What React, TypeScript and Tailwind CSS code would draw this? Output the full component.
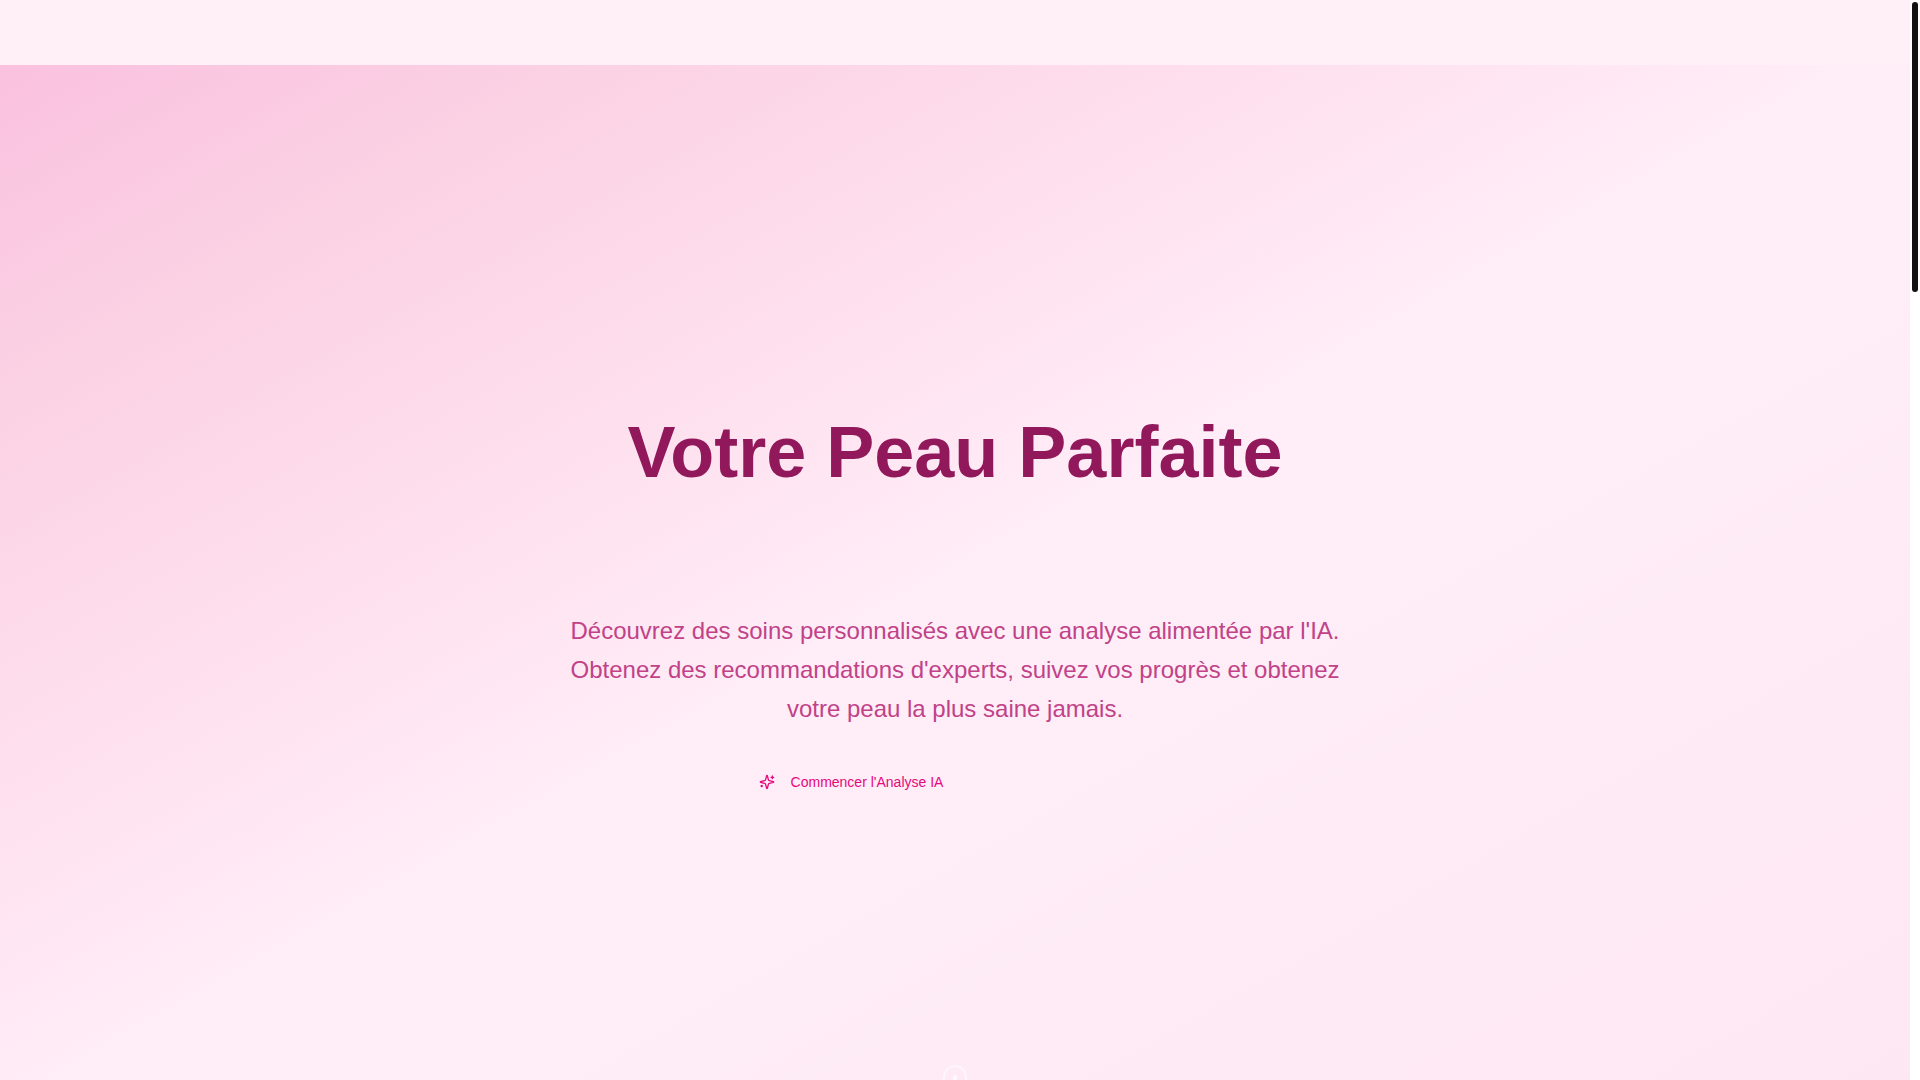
const Header = () => <header className="h-[65px] w-full shrink-0 bg-[#fff0f7]" />;

const SparklesIcon = () => (
    <svg
        viewBox="0 0 24 24"
        className="size-4"
        fill="none"
        stroke="currentColor"
        strokeWidth="2"
        strokeLinecap="round"
        strokeLinejoin="round"
        aria-hidden="true"
    >
        <path d="M9.937 15.5A2 2 0 0 0 8.5 14.063l-6.135-1.582a.5.5 0 0 1 0-.962L8.5 9.936A2 2 0 0 0 9.937 8.5l1.582-6.135a.5.5 0 0 1 .963 0L14.063 8.5A2 2 0 0 0 15.5 9.937l6.135 1.581a.5.5 0 0 1 0 .964L15.5 14.063a2 2 0 0 0-1.437 1.437l-1.582 6.135a.5.5 0 0 1-.963 0z" />
        <path d="M20 3v4" />
        <path d="M22 5h-4" />
        <path d="M4 17v2" />
        <path d="M5 18H3" />
    </svg>
);

// Mouse-shaped hint at the bottom of the hero
const ScrollHint = () => (
    <div className="absolute bottom-10 left-1/2 flex h-10 w-6 -translate-x-1/2 justify-center rounded-full border-2 border-white/50">
        <div className="mt-2 h-3 w-1 rounded-full bg-white/70" />
    </div>
);

const Hero = () => (
    <section className="relative flex h-screen w-full shrink-0 items-center justify-center bg-[linear-gradient(to_bottom_right,#fac1df_0%,#fbd1e4_15%,#fedeec_31%,#ffeef8_50%,#fde7f2_100%)]">
        <div className="w-full max-w-4xl px-4 text-center">
            <h1 className="mb-6 pb-[90px] text-7xl leading-[90px] font-bold text-[#90185b]">
                Votre Peau Parfaite
            </h1>
            <p className="mx-auto mb-8 max-w-[780px] text-2xl leading-[39px] text-[#c14288]">
                Découvrez des soins personnalisés avec une analyse alimentée par l'IA. Obtenez des
                recommandations d'experts, suivez vos progrès et obtenez votre peau la plus saine jamais.
            </p>
            <div className="flex justify-center gap-4">
                <button type="button" className="flex h-11 items-center gap-4 px-8 text-sm text-[#e6087c]">
                    <SparklesIcon />
                    Commencer l'Analyse IA
                </button>
                <div className="w-48" />
            </div>
        </div>
        <ScrollHint />
    </section>
);

export default function App() {
    return (
        <div className="flex h-screen overflow-hidden bg-white font-['Liberation_Sans',Arial,sans-serif]">
            <main className="flex flex-1 flex-col overflow-hidden">
                <Header />
                <Hero />
            </main>
            <div className="w-[10px] shrink-0 px-[2px] py-[2px]">
                <div className="h-[290px] rounded-full bg-[#111111]" />
            </div>
        </div>
    );
}
